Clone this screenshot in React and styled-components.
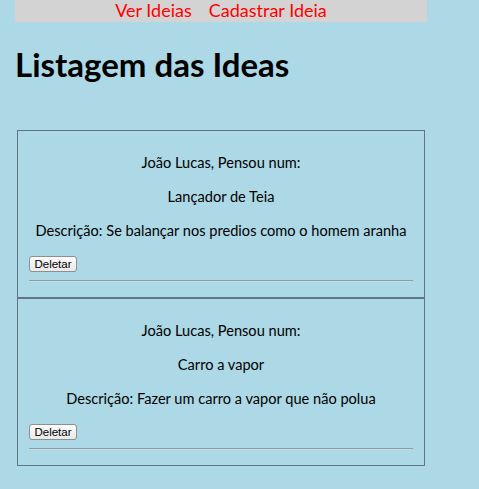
import styled, { createGlobalStyle } from "styled-components";

const GlobalStyle = createGlobalStyle`
  body {
    margin: 0;
    background-color: lightblue;
    font-family: "Comic Sans MS", "Lato", sans-serif;
  }
`;

const ideias = [
  {
    id: 1,
    autor: "João Lucas",
    titulo: "Lançador de Teia",
    descricao: "Se balançar nos predios como o homem aranha",
  },
  {
    id: 2,
    autor: "João Lucas",
    titulo: "Carro a vapor",
    descricao: "Fazer um carro a vapor que não polua",
  },
];

const App = () => {
  return (
    <Page>
      <GlobalStyle />
      <Nav>
        <NavLink href="#">Ver Ideias</NavLink>
        <NavLink href="#">Cadastrar Ideia</NavLink>
      </Nav>
      <Title>Listagem das Ideas</Title>
      <Lista>
        {ideias.map((ideia) => (
          <Card key={ideia.id}>
            <Texto>{ideia.autor}, Pensou num:</Texto>
            <Texto>{ideia.titulo}</Texto>
            <Texto>Descrição: {ideia.descricao}</Texto>
            <Botao type="button">Deletar</Botao>
            <Linha />
          </Card>
        ))}
      </Lista>
    </Page>
  );
};

export default App;

const Page = styled.div`
  padding: 0 52px 0 15px;
`;

const Nav = styled.nav`
  width: 412px;
  height: 22px;
  background-color: lightgray;
  display: flex;
  justify-content: center;
  align-items: center;
  gap: 17px;
`;

const NavLink = styled.a`
  color: red;
  text-decoration: none;
  font-size: 18px;
  line-height: 20px;
  margin-top: -2px;
`;

const Title = styled.h1`
  font-size: 33px;
  margin: 23px 0 47px;
  line-height: 38px;
`;

const Lista = styled.div`
  margin-left: 2px;
  width: 408px;
`;

const Card = styled.div`
  border: 1px solid #5f7680;
  padding: 7px 11px 7px;
  text-align: center;
`;

const Texto = styled.p`
  margin: 16px 0;
  font-size: 14.6px;
  line-height: 18px;
  white-space: nowrap;
`;

const Botao = styled.button`
  display: block;
  box-sizing: border-box;
  width: 48px;
  height: 16px;
  font-family: Arial, "Liberation Sans", sans-serif;
  font-size: 11.5px;
  line-height: 12px;
  padding: 0 4px;
  border: 1px solid #8f8f8f;
  border-radius: 3px;
  background: linear-gradient(#fbfbfb, #e9e9e9);
  color: #000;
`;

const Linha = styled.hr`
  margin: 8px 0 8px;
  border: none;
  border-top: 1px solid #8c9ca3;
  border-bottom: 1px solid #c7dde4;
`;
